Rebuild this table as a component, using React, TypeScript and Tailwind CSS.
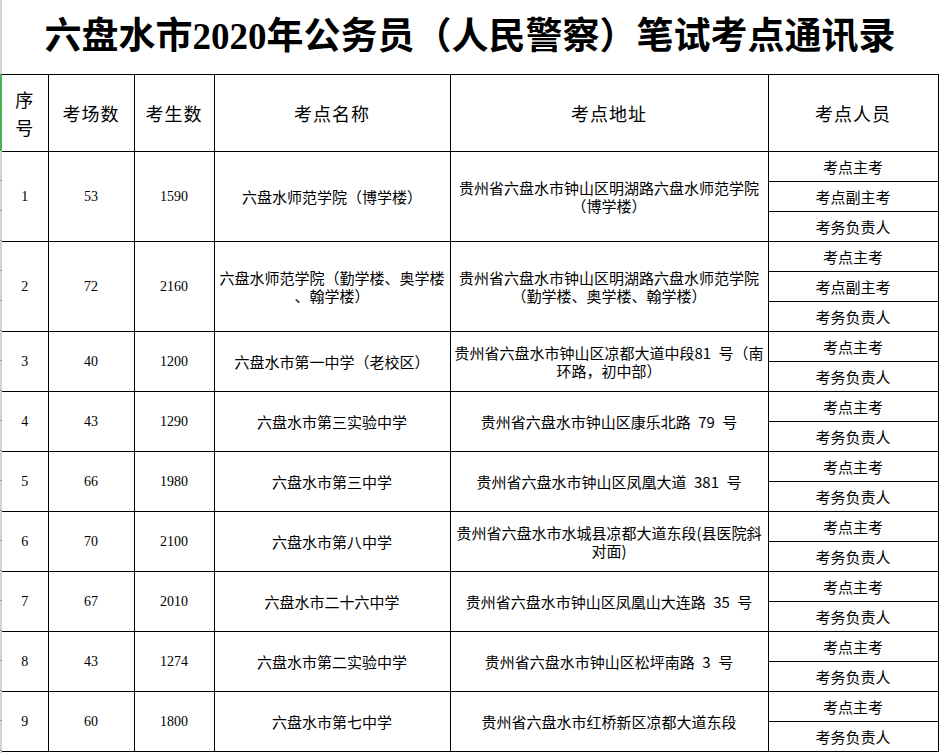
import React from "react";

type Row = {
  no: string;
  rooms: string;
  people: string;
  name: string;
  address: string;
  staff: string[];
};

// addresses use en spaces (\u2002) to match the half-width gaps of the source sheet
const rows: Row[] = [
  {
    no: "1",
    rooms: "53",
    people: "1590",
    name: "六盘水师范学院（博学楼）",
    address: "贵州省六盘水市钟山区明湖路六盘水师范学院\n（博学楼）",
    staff: ["考点主考", "考点副主考", "考务负责人"],
  },
  {
    no: "2",
    rooms: "72",
    people: "2160",
    name: "六盘水师范学院（勤学楼、奥学楼\n、翰学楼）",
    address: "贵州省六盘水市钟山区明湖路六盘水师范学院\n（勤学楼、奥学楼、翰学楼）",
    staff: ["考点主考", "考点副主考", "考务负责人"],
  },
  {
    no: "3",
    rooms: "40",
    people: "1200",
    name: "六盘水市第一中学（老校区）",
    address: "贵州省六盘水市钟山区凉都大道中段81\u2002号（南\n环路，初中部）",
    staff: ["考点主考", "考务负责人"],
  },
  {
    no: "4",
    rooms: "43",
    people: "1290",
    name: "六盘水市第三实验中学",
    address: "贵州省六盘水市钟山区康乐北路\u200279\u2002号",
    staff: ["考点主考", "考务负责人"],
  },
  {
    no: "5",
    rooms: "66",
    people: "1980",
    name: "六盘水市第三中学",
    address: "贵州省六盘水市钟山区凤凰大道\u2002381\u2002号",
    staff: ["考点主考", "考务负责人"],
  },
  {
    no: "6",
    rooms: "70",
    people: "2100",
    name: "六盘水市第八中学",
    address: "贵州省六盘水市水城县凉都大道东段(县医院斜\n对面)",
    staff: ["考点主考", "考务负责人"],
  },
  {
    no: "7",
    rooms: "67",
    people: "2010",
    name: "六盘水市二十六中学",
    address: "贵州省六盘水市钟山区凤凰山大连路\u200235\u2002号",
    staff: ["考点主考", "考务负责人"],
  },
  {
    no: "8",
    rooms: "43",
    people: "1274",
    name: "六盘水市第二实验中学",
    address: "贵州省六盘水市钟山区松坪南路\u20023\u2002号",
    staff: ["考点主考", "考务负责人"],
  },
  {
    no: "9",
    rooms: "60",
    people: "1800",
    name: "六盘水市第七中学",
    address: "贵州省六盘水市红桥新区凉都大道东段",
    staff: ["考点主考", "考务负责人"],
  },
];

const serif = "font-['Liberation_Serif','Noto_Sans_CJK_SC',serif]";
const cjk = "font-['Noto_Sans_CJK_SC',sans-serif]";

const cell = "border border-black text-center align-middle p-0";

export default function App() {
  const subRows = rows.reduce((n, r) => n + r.staff.length, 0);

  return (
    <div className="flex w-[939px] h-[753px] bg-white text-black overflow-hidden">
      {/* spreadsheet row-header edge */}
      <div className="flex flex-col w-[2px] shrink-0 bg-[#d4d4d4]">
        <div className="h-[74px] shrink-0" />
        <div className="h-[77px] shrink-0 bg-[#4caf50]" />
        {Array.from({ length: subRows }).map((_, i) => (
          <div key={i} className="h-[30px] shrink-0 border-b border-[#9e9e9e]" />
        ))}
      </div>

      <div className="flex flex-col w-[936px] shrink-0">
        <div
          className={`h-[74px] flex items-center justify-center text-[37px] font-bold ${serif}`}
        >
          六盘水市2020年公务员（人民警察）笔试考点通讯录
        </div>

        <table className={`table-fixed border-collapse w-[936px] border-l-0 ${cjk}`}>
          <colgroup>
            <col className="w-[46px]" />
            <col className="w-[86px]" />
            <col className="w-[80px]" />
            <col className="w-[236px]" />
            <col className="w-[318px]" />
            <col className="w-[170px]" />
          </colgroup>
          <thead>
            <tr className="h-[77px] text-[18px] leading-[28px] tracking-[1px]">
              <th className={`${cell} border-l-0 font-normal`}>
                序
                <br />号
              </th>
              <th className={`${cell} font-normal`}>考场数</th>
              <th className={`${cell} font-normal`}>考生数</th>
              <th className={`${cell} font-normal`}>考点名称</th>
              <th className={`${cell} font-normal`}>考点地址</th>
              <th className={`${cell} font-normal`}>考点人员</th>
            </tr>
          </thead>
          <tbody className="text-[15px] leading-[18px]">
            {rows.map((r) =>
              r.staff.map((s, i) => (
                <tr key={r.no + s} className="h-[30px]">
                  {i === 0 && (
                    <>
                      <td rowSpan={r.staff.length} className={`${cell} border-l-0 text-[14px] ${serif}`}>
                        {r.no}
                      </td>
                      <td rowSpan={r.staff.length} className={`${cell} text-[14px] ${serif}`}>
                        {r.rooms}
                      </td>
                      <td rowSpan={r.staff.length} className={`${cell} text-[14px] ${serif}`}>
                        {r.people}
                      </td>
                      <td rowSpan={r.staff.length} className={`${cell} whitespace-pre`}>
                        {r.name}
                      </td>
                      <td rowSpan={r.staff.length} className={`${cell} whitespace-pre`}>
                        {r.address}
                      </td>
                    </>
                  )}
                  <td className={cell}>{s}</td>
                </tr>
              ))
            )}
          </tbody>
        </table>
      </div>
    </div>
  );
}
